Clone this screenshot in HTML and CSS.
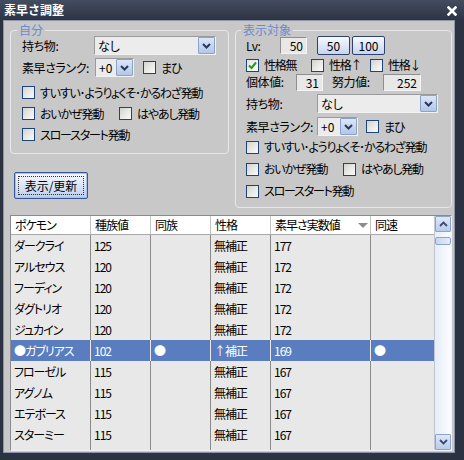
FILE: index.html
```html
<!DOCTYPE html>
<html lang="ja">
<head>
<meta charset="utf-8">
<title>素早さ調整</title>
<link rel="stylesheet" href="styles.css">
</head>
<body>
<div class="window">
  <div class="titlebar">
    <span class="title">素早さ調整</span>
    <svg class="close" width="10" height="10" viewBox="0 0 10 10"><path d="M1.5 1.5 L8.5 8.5 M8.5 1.5 L1.5 8.5" stroke="#fff" stroke-width="2.6" stroke-linecap="square"/></svg>
  </div>
  <div class="frame">
    <div class="top">
      <div class="left-col">
        <div class="group g-left">
          <div class="legend">自分</div>
          <div class="row r1">
            <span class="lbl w72">持ち物:</span>
            <div class="select s-left"><span class="val">なし</span><span class="arrow"><svg width="11" height="8" viewBox="0 0 11 8"><path d="M2 2 L5.5 5.5 L9 2" fill="none" stroke="#27385c" stroke-width="2"/></svg></span></div>
          </div>
          <div class="row r2">
            <span class="lbl w73">素早さランク:</span>
            <div class="select s-rank-l"><span class="val">+0</span><span class="arrow"><svg width="11" height="8" viewBox="0 0 11 8"><path d="M2 2 L5.5 5.5 L9 2" fill="none" stroke="#27385c" stroke-width="2"/></svg></span></div>
            <span class="chk ml9"><span class="box"></span><span>まひ</span></span>
          </div>
          <div class="row rc"><span class="chk"><span class="box"></span><span>すいすい･ようりょくそ･かるわざ発動</span></span></div>
          <div class="row rc"><span class="chk w97"><span class="box"></span><span>おいかぜ発動</span></span><span class="chk"><span class="box"></span><span>はやあし発動</span></span></div>
          <div class="row rc"><span class="chk"><span class="box"></span><span>スロースタート発動</span></span></div>
        </div>
        <div class="btn-update"><span class="focus">表示/更新</span></div>
      </div>
      <div class="group g-right">
        <div class="legend">表示対象</div>
        <div class="row r1">
          <span class="lbl w34">Lv:</span>
          <span class="num n-lv">50</span>
          <span class="sbtn ml10">50</span>
          <span class="sbtn ml2">100</span>
        </div>
        <div class="row rs">
          <span class="chk w65"><span class="box checked"><svg width="11" height="11" viewBox="0 0 11 11"><path d="M2 5.5 L4.5 8 L9 2.5" fill="none" stroke="#1e9a1e" stroke-width="2"/></svg></span><span>性格無</span></span>
          <span class="chk w59"><span class="box"></span><span>性格↑</span></span>
          <span class="chk"><span class="box"></span><span>性格↓</span></span>
        </div>
        <div class="row ri">
          <span class="lbl w50">個体値:</span>
          <span class="num n-iv">31</span>
          <span class="lbl w51 ml9">努力値:</span>
          <span class="num n-ev">252</span>
        </div>
        <div class="row rm">
          <span class="lbl w71">持ち物:</span>
          <div class="select s-right"><span class="val">なし</span><span class="arrow"><svg width="11" height="8" viewBox="0 0 11 8"><path d="M2 2 L5.5 5.5 L9 2" fill="none" stroke="#27385c" stroke-width="2"/></svg></span></div>
        </div>
        <div class="row rk">
          <span class="lbl w71">素早さランク:</span>
          <div class="select s-rank-r"><span class="val">+0</span><span class="arrow"><svg width="11" height="8" viewBox="0 0 11 8"><path d="M2 2 L5.5 5.5 L9 2" fill="none" stroke="#27385c" stroke-width="2"/></svg></span></div>
          <span class="chk ml8"><span class="box"></span><span>まひ</span></span>
        </div>
        <div class="row rc2"><span class="chk"><span class="box"></span><span>すいすい･ようりょくそ･かるわざ発動</span></span></div>
        <div class="row rc2"><span class="chk w97"><span class="box"></span><span>おいかぜ発動</span></span><span class="chk"><span class="box"></span><span>はやあし発動</span></span></div>
        <div class="row rc2"><span class="chk"><span class="box"></span><span>スロースタート発動</span></span></div>
      </div>
    </div>
    <div class="table">
      <div class="list">
        <div class="hdr">
          <span class="c">ポケモン</span>
          <span class="c">種族値</span>
          <span class="c">同族</span>
          <span class="c">性格</span>
          <span class="c sort"><span>素早さ実数値</span><span class="tri"></span></span>
          <span class="c last">同速</span>
        </div>
        <div class="tr"><span class="c">ダークライ</span><span class="c">125</span><span class="c"></span><span class="c">無補正</span><span class="c">177</span><span class="c last"></span></div>
        <div class="tr"><span class="c">アルセウス</span><span class="c">120</span><span class="c"></span><span class="c">無補正</span><span class="c">172</span><span class="c last"></span></div>
        <div class="tr"><span class="c">フーディン</span><span class="c">120</span><span class="c"></span><span class="c">無補正</span><span class="c">172</span><span class="c last"></span></div>
        <div class="tr"><span class="c">ダグトリオ</span><span class="c">120</span><span class="c"></span><span class="c">無補正</span><span class="c">172</span><span class="c last"></span></div>
        <div class="tr"><span class="c">ジュカイン</span><span class="c">120</span><span class="c"></span><span class="c">無補正</span><span class="c">172</span><span class="c last"></span></div>
        <div class="tr sel"><span class="c">●ガブリアス</span><span class="c">102</span><span class="c">●</span><span class="c">↑補正</span><span class="c">169</span><span class="c last">●</span></div>
        <div class="tr"><span class="c">フローゼル</span><span class="c">115</span><span class="c"></span><span class="c">無補正</span><span class="c">167</span><span class="c last"></span></div>
        <div class="tr"><span class="c">アグノム</span><span class="c">115</span><span class="c"></span><span class="c">無補正</span><span class="c">167</span><span class="c last"></span></div>
        <div class="tr"><span class="c">エテボース</span><span class="c">115</span><span class="c"></span><span class="c">無補正</span><span class="c">167</span><span class="c last"></span></div>
        <div class="tr"><span class="c">スターミー</span><span class="c">115</span><span class="c"></span><span class="c">無補正</span><span class="c">167</span><span class="c last"></span></div>
        <div class="tr"><span class="c"></span><span class="c"></span><span class="c"></span><span class="c"></span><span class="c"></span><span class="c last"></span></div>
      </div>
      <div class="scrollbar">
        <span class="sb-btn"><svg width="9" height="6" viewBox="0 0 9 6"><path d="M1 5 L4.5 1.5 L8 5" fill="none" stroke="#3a4a6a" stroke-width="1.8"/></svg></span>
        <span class="thumb"></span>
        <span class="sb-fill"></span>
        <span class="sb-btn"><svg width="9" height="6" viewBox="0 0 9 6"><path d="M1 1 L4.5 4.5 L8 1" fill="none" stroke="#3a4a6a" stroke-width="1.8"/></svg></span>
      </div>
    </div>
  </div>
</div>
</body>
</html>
```
FILE: styles.css
```css
* { box-sizing: border-box; }
html, body { margin: 0; padding: 0; }
body {
  width: 464px;
  height: 460px;
  overflow: hidden;
  background: #2b3242;
  font-family: "Noto Sans CJK JP", "Noto Sans", sans-serif;
  font-size: 12px;
  font-feature-settings: "palt";
  color: #000;
}
.window {
  width: 464px;
  height: 460px;
  display: flex;
  flex-direction: column;
  background: #2b3242;
}
.titlebar {
  height: 20px;
  flex: none;
  background: linear-gradient(#434d60, #2c3343);
  display: flex;
  align-items: center;
  justify-content: space-between;
  padding: 0 7px 0 4px;
}
.title {
  color: #fff;
  font-weight: bold;
  font-size: 12px;
  line-height: 14px;
  font-feature-settings: normal;
}
.close { display: block; margin-top: 2px; }
.frame {
  flex: 1;
  margin: 0 9px 7px 3px;
  border: 1px solid #8d96a8;
  background: #c8c8c8;
  display: flex;
  flex-direction: column;
}
.top {
  display: flex;
  align-items: flex-start;
  gap: 6px;
  padding: 9px 0 0 6px;
}
.left-col { width: 219px; }
.group {
  border: 1px solid #e8e8e8;
  border-radius: 4px;
}
.g-left { height: 124px; padding-left: 11px; }
.g-right { width: 217px; height: 178px; padding-left: 10px; }
.legend {
  display: block;
  width: fit-content;
  height: 14px;
  line-height: 14px;
  margin: -8px 0 -6px -5px;
  padding: 0 2px;
  background: #c8c8c8;
  color: #6a8bd2;
}
.row {
  display: flex;
  align-items: center;
  white-space: nowrap;
}
.r1 { margin-top: 5px; height: 19px; }
.r2 { margin-top: 3px; height: 19px; }
.rc { height: 21px; }
.g-left .r2 + .rc { margin-top: 5px; }
.rs { margin-top: 2px; height: 16px; }
.ri { height: 18px; }
.rm { margin-top: 3px; height: 19px; }
.rk { margin-top: 4px; height: 19px; }
.rc2 { height: 22px; }
.lbl { display: inline-block; line-height: 14px; letter-spacing: -0.4px; }
.w34 { width: 34px; }
.w50 { width: 50px; }
.w51 { width: 51px; }
.w71 { width: 71px; }
.w72 { width: 72px; }
.w73 { width: 73px; }
.ml2 { margin-left: 2px; }
.ml8 { margin-left: 8px; }
.ml9 { margin-left: 9px; }
.ml10 { margin-left: 10px; }

.chk {
  display: inline-flex;
  align-items: center;
  gap: 5px;
  line-height: 14px;
  letter-spacing: -1.2px;
}
.w97 { width: 97px; }
.w65 { width: 65px; }
.w59 { width: 59px; }
.box {
  width: 13px;
  height: 13px;
  flex: none;
  border: 1px solid #1d4579;
  background: linear-gradient(135deg, #d2d2ce 0%, #e8e8e6 50%, #fbfbfb 100%);
  display: flex;
  align-items: center;
  justify-content: center;
}
.box.checked { background: linear-gradient(135deg, #e2e2de, #fdfdfd); }

.select {
  display: flex;
  height: 19px;
  background: #ececec;
  border: 1px solid;
  border-color: #9a9a9a #f2f2f2 #f2f2f2 #9a9a9a;
}
.select .val { flex: 1; padding-left: 3px; line-height: 17px; }
.select .arrow {
  width: 17px;
  flex: none;
  border: 1px solid #8aa2cc;
  border-radius: 1px;
  background: linear-gradient(#dbe6f7, #b2c7e8);
  display: flex;
  align-items: center;
  justify-content: center;
}
.s-left { width: 122px; }
.s-right { width: 121px; }
.s-rank-l { width: 39px; }
.s-rank-r { width: 41px; }

.num {
  display: inline-block;
  height: 17px;
  line-height: 15px;
  text-align: right;
  padding-right: 3px;
  background: #e8e8e8;
  border: 1px solid;
  border-color: #8e8e8e #f4f4f4 #f4f4f4 #8e8e8e;
}
.n-lv { width: 27px; }
.n-iv { width: 27px; }
.n-ev { width: 38px; }

.sbtn {
  display: inline-block;
  width: 33px;
  height: 19px;
  line-height: 17px;
  text-align: center;
  border: 1px solid #2e4170;
  border-radius: 2px;
  background: linear-gradient(#f6f9ff, #c6d5ef);
}

.btn-update {
  margin: 18px 0 0 4px;
  width: 74px;
  height: 27px;
  padding: 3px;
  border: 1px solid #365697;
  border-radius: 2px;
  background: linear-gradient(#f6f9ff 0%, #dbe5f6 50%, #bccdec 100%);
  box-shadow: inset 0 0 0 1px #a8c0ea;
}
.btn-update .focus {
  display: flex;
  height: 100%;
  align-items: center;
  justify-content: center;
  border: 1px dotted #333;
  line-height: 14px;
}

.table {
  margin: 7px 0 0 6px;
  width: 442px;
  height: 236px;
  border: 1px solid;
  border-color: #8c8c8c #f2f2f2 #f2f2f2 #8c8c8c;
  display: flex;
  overflow: hidden;
}
.list {
  width: 423px;
  height: 234px;
  overflow: hidden;
  background: #e8e8e8;
}
.hdr, .tr {
  display: grid;
  grid-template-columns: 80px 60px 60px 60px 100px 63px;
  letter-spacing: -1px;
}
.hdr {
  height: 19px;
  background: #fff;
  border-bottom: 1px solid #a8a8a8;
}
.hdr .c {
  line-height: 18px;
  padding-left: 4px;
  border-right: 1px solid #c4c4c4;
}
.hdr .c.last { border-right: none; }
.hdr .sort {
  display: flex;
  align-items: center;
  justify-content: space-between;
  padding-right: 2px;
}
.tri {
  width: 0;
  height: 0;
  border-left: 5px solid transparent;
  border-right: 5px solid transparent;
  border-top: 5px solid #8c8c8c;
}
.tr { height: 21px; }
.tr .c {
  line-height: 21px;
  padding-left: 3px;
  border-right: 1px solid #8a8a8a;
  white-space: nowrap;
  overflow: hidden;
}
.tr .c.last { border-right: none; }
.tr.sel .c {
  background: #5a7dbf;
  color: #fff;
  border-right-color: #e8e8e8;
}

.scrollbar {
  width: 17px;
  height: 234px;
  display: flex;
  flex-direction: column;
  border-left: 1px solid #c0c6d2;
  background: linear-gradient(90deg, #e6edf8, #fbfdff);
}
.sb-btn {
  height: 16px;
  flex: none;
  border: 1px solid #8ea3c9;
  border-radius: 1px;
  background: linear-gradient(#dfe8f8, #b8cbea);
  display: flex;
  align-items: center;
  justify-content: center;
}
.thumb {
  height: 8px;
  flex: none;
  margin-top: 5px;
  border: 1px solid #8ea3c9;
  border-radius: 2px;
  background: linear-gradient(90deg, #c8d6ee, #e4ecfa);
}
.sb-fill { flex: 1; }
```
